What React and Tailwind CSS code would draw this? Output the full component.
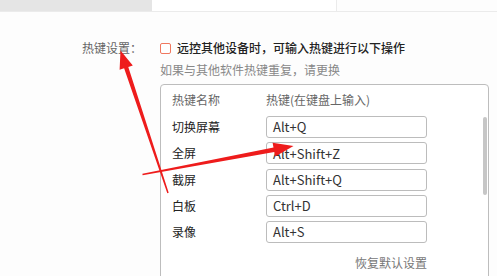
const hotkeys = [
  { name: '切换屏幕', key: 'Alt+Q' },
  { name: '全屏', key: 'Alt+Shift+Z' },
  { name: '截屏', key: 'Alt+Shift+Q' },
  { name: '白板', key: 'Ctrl+D' },
  { name: '录像', key: 'Alt+S' },
];

const font = { fontFamily: '"Noto Sans CJK SC", "Noto Sans", sans-serif' };

function Arrows() {
  return (
    <svg className="pointer-events-none absolute left-0 top-0" width="497" height="276">
      <polygon
        fill="#ee1c1c"
        points="120.5,50.5 132.8,65.4 128.3,66.9 168.7,192.8 167.3,193.2 124.1,68.3 119.6,69.8"
      />
      <polygon
        fill="#ee1c1c"
        points="293.5,146 275.2,156.6 274.3,151.9 142.6,175.2 142.4,173.8 273.5,147.5 272.6,142.8"
      />
    </svg>
  );
}

export default function App() {
  return (
    <div className="relative h-[276px] w-[497px] overflow-hidden bg-[#fdfdfd]" style={font}>
      <div className="flex h-[12px] border-b border-[#ebebeb]">
        <div className="w-[152px] bg-[#e5e5e5]" />
        <div className="w-[185px] border-r border-[#ebebeb] bg-white" />
        <div className="flex-1 bg-[#fdfdfd]" />
      </div>

      <div className="flex pt-[28px]">
        <div className="w-[160px] pl-[82px] text-[12px] leading-[16px] text-[#666]">热键设置：</div>
        <div className="flex-1">
          <div className="flex h-[16px] items-center">
            <span className="mr-[6px] h-[11px] w-[11px] rounded-[2px] border border-[#f0785f] bg-white" />
            <span className="text-[12px] font-medium leading-[16px] text-[#222]">远控其他设备时，可输入热键进行以下操作</span>
          </div>
          <div className="mt-[6px] text-[12px] leading-[16px] text-[#888]">如果与其他软件热键重复，请更换</div>

          <div className="relative mt-[6px] h-[220px] w-[329px] rounded-[4px] border border-[#bdbdbd] bg-white pl-[11px] pt-[7px]">
            <div className="flex text-[12px] leading-[16px] text-[#666]">
              <span className="w-[94px]">热键名称</span>
              <span>热键(在键盘上输入)</span>
            </div>
            <div className="mt-[8px] flex flex-col gap-[4.25px]">
              {hotkeys.map((h) => (
                <div key={h.name} className="flex items-center">
                  <span className="w-[94px] text-[12px] text-[#222]">{h.name}</span>
                  <div className="flex h-[22px] w-[161px] items-center rounded-[3px] border border-[#bcbcbc] bg-white pl-[6px] text-[13px] text-[#333]">
                    {h.key}
                  </div>
                </div>
              ))}
            </div>
            <div className="mt-[12px] w-[255px] text-right text-[12px] leading-[16px] text-[#777]">恢复默认设置</div>
            <div className="absolute right-[1px] top-[32px] h-[78px] w-[4px] rounded-full bg-[#c6c6c6]" />
          </div>
        </div>
      </div>

      <Arrows />
    </div>
  );
}
